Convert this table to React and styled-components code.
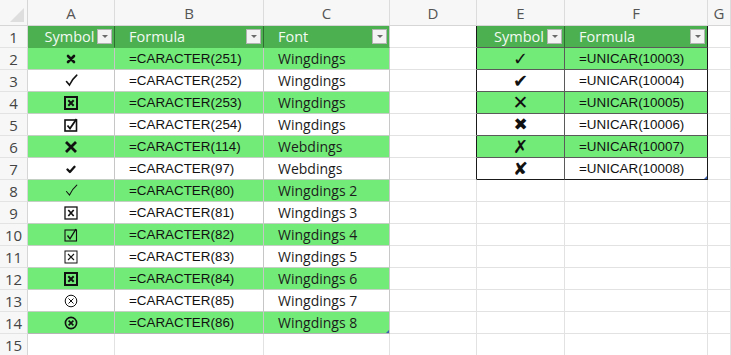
import React from 'react';
import styled, { createGlobalStyle, css } from 'styled-components';

const GlobalStyle = createGlobalStyle`
  html, body {
    margin: 0;
    padding: 0;
    background: #ffffff;
    overflow: hidden;
  }
`;

const COLS = ['A', 'B', 'C', 'D', 'E', 'F', 'G'];
const GREEN = '#4caf50';
const BAND = '#72eb78';
const GRID = '#e2e2e2';

const leftRows = [
  { sym: 'xSmall', formula: '=CARACTER(251)', font: 'Wingdings' },
  { sym: 'check', formula: '=CARACTER(252)', font: 'Wingdings' },
  { sym: 'boxXBold', formula: '=CARACTER(253)', font: 'Wingdings' },
  { sym: 'boxCheckBold', formula: '=CARACTER(254)', font: 'Wingdings' },
  { sym: 'xBig', formula: '=CARACTER(114)', font: 'Webdings' },
  { sym: 'checkSmall', formula: '=CARACTER(97)', font: 'Webdings' },
  { sym: 'checkThin', formula: '=CARACTER(80)', font: 'Wingdings 2' },
  { sym: 'boxX', formula: '=CARACTER(81)', font: 'Wingdings 3' },
  { sym: 'boxCheck', formula: '=CARACTER(82)', font: 'Wingdings 4' },
  { sym: 'boxXThin', formula: '=CARACTER(83)', font: 'Wingdings 5' },
  { sym: 'boxXBold', formula: '=CARACTER(84)', font: 'Wingdings 6' },
  { sym: 'circleX', formula: '=CARACTER(85)', font: 'Wingdings 7' },
  { sym: 'circleXBold', formula: '=CARACTER(86)', font: 'Wingdings 8' },
];

const rightRows = [
  { glyph: '\u2713', size: 18, formula: '=UNICAR(10003)' },
  { glyph: '\u2714', size: 18, formula: '=UNICAR(10004)' },
  { glyph: '\u2715', size: 19, formula: '=UNICAR(10005)' },
  { glyph: '\u2716', size: 17, formula: '=UNICAR(10006)' },
  { glyph: '\u2717', size: 18, formula: '=UNICAR(10007)' },
  { glyph: '\u2718', size: 18, formula: '=UNICAR(10008)' },
];

const Sheet = styled.div`
  display: grid;
  grid-template-columns: 28px 87px 149px 126px 87px 88px 143px 1fr;
  grid-template-rows: 26px repeat(15, 22px);
  width: 731px;
  height: 355px;
  overflow: hidden;
  font-family: 'Liberation Sans', Arial, sans-serif;
  color: #1a1a1a;
`;

const Corner = styled.div`
  position: relative;
  background: #f7f7f7;
  border-right: 1px solid #d6d6d6;
  border-bottom: 1px solid #d6d6d6;

  &::after {
    content: '';
    position: absolute;
    right: 3px;
    bottom: 3px;
    border-left: 14px solid transparent;
    border-bottom: 14px solid #dedede;
  }
`;

const ColHead = styled.div`
  display: flex;
  align-items: center;
  justify-content: center;
  background: #f7f7f7;
  border-right: 1px solid #dcdcdc;
  border-bottom: 1px solid #d6d6d6;
  font-family: 'Open Sans', sans-serif;
  font-size: 15px;
  color: #555;
`;

const RowHead = styled.div`
  display: flex;
  align-items: center;
  justify-content: center;
  background: #f7f7f7;
  border-right: 1px solid #d6d6d6;
  border-bottom: 1px solid #e3e3e3;
  font-family: 'Open Sans', sans-serif;
  font-size: 15px;
  color: #444;
`;

const Cell = styled.div`
  position: relative;
  display: flex;
  align-items: center;
  justify-content: ${(p) => (p.$center ? 'center' : 'flex-start')};
  padding-left: ${(p) => (p.$center ? '0' : '14px')};
  background: ${(p) => p.$bg || '#ffffff'};
  border-right: 1px solid ${(p) => p.$right || GRID};
  border-bottom: 1px solid ${(p) => p.$bottom || GRID};
  font-size: 13.4px;
  color: #111;
  white-space: nowrap;
  overflow: hidden;
  ${(p) =>
    p.$header &&
    css`
      font-family: 'Open Sans', sans-serif;
      font-size: 14.5px;
      color: #f2faf2;
      justify-content: space-between;
      padding-left: 14px;
      padding-right: 2px;
    `}
  ${(p) =>
    p.$aptos &&
    css`
      font-family: 'Open Sans', sans-serif;
      font-size: 14px;
      color: #1c1c1c;
    `}
`;

const HeadLabel = styled.span`
  flex: 1;
  text-align: ${(p) => (p.$center ? 'center' : 'left')};
`;

const Dropdown = styled.span`
  flex: none;
  width: 15px;
  height: 15px;
  box-sizing: border-box;
  background: #f3f3f3;
  border: 1px solid #b3b3b3;
  display: flex;
  align-items: center;
  justify-content: center;

  &::before {
    content: '';
    border-left: 3px solid transparent;
    border-right: 3px solid transparent;
    border-top: 3px solid #6a6a6a;
  }
`;

const FillHandle = styled.span`
  position: absolute;
  right: -1px;
  bottom: -1px;
  width: 0;
  height: 0;
  border-left: 5px solid transparent;
  border-bottom: 5px solid #3b5fb0;
`;

const Glyph = styled.span`
  font-family: 'DejaVu Sans', sans-serif;
  font-size: ${(p) => p.$size}px;
  line-height: 1;
  color: #111;
`;

const Icon = styled.svg`
  display: block;
  color: #111;
`;

function Symbol({ kind }) {
  switch (kind) {
    case 'xSmall':
      return (
        <Icon width="10" height="10" viewBox="0 0 10 10">
          <path d="M2 2 L8 8 M8 2 L2 8" stroke="currentColor" strokeWidth="2.6" strokeLinecap="round" />
        </Icon>
      );
    case 'check':
      return (
        <Icon width="13" height="13" viewBox="0 0 13 13">
          <path d="M1.5 7.5 L4.5 11 C6.5 7 8.5 4 11.8 1.2" stroke="currentColor" strokeWidth="1.6" fill="none" strokeLinecap="round" />
        </Icon>
      );
    case 'checkThin':
      return (
        <Icon width="13" height="13" viewBox="0 0 13 13">
          <path d="M1.5 7.5 L4.5 11 C6.5 7 8.5 4 11.8 1.2" stroke="currentColor" strokeWidth="1.1" fill="none" strokeLinecap="round" />
        </Icon>
      );
    case 'checkSmall':
      return (
        <Icon width="10" height="10" viewBox="0 0 10 10">
          <path d="M1.5 5.5 L3.9 8 L8.5 2.8" stroke="currentColor" strokeWidth="2.3" fill="none" strokeLinecap="round" strokeLinejoin="round" />
        </Icon>
      );
    case 'xBig':
      return (
        <Icon width="14" height="14" viewBox="0 0 14 14">
          <path d="M2 2 L12 12 M12 2 L2 12" stroke="currentColor" strokeWidth="2.8" />
        </Icon>
      );
    case 'boxXBold':
      return (
        <Icon width="14" height="14" viewBox="0 0 14 14">
          <rect x="1" y="1" width="12" height="12" fill="none" stroke="currentColor" strokeWidth="2" />
          <path d="M4.3 4.3 L9.7 9.7 M9.7 4.3 L4.3 9.7" stroke="currentColor" strokeWidth="2" />
        </Icon>
      );
    case 'boxX':
      return (
        <Icon width="14" height="14" viewBox="0 0 14 14">
          <rect x="1" y="1" width="12" height="12" fill="none" stroke="currentColor" strokeWidth="1.3" />
          <path d="M4.3 4 L9.7 10 M9.7 4 L4.3 10" stroke="currentColor" strokeWidth="1.7" />
        </Icon>
      );
    case 'boxXThin':
      return (
        <Icon width="14" height="14" viewBox="0 0 14 14">
          <rect x="1" y="1" width="12" height="12" fill="none" stroke="currentColor" strokeWidth="1" />
          <path d="M4 4 L10 10 M10 4 L4 10" stroke="currentColor" strokeWidth="1.1" />
        </Icon>
      );
    case 'boxCheckBold':
      return (
        <Icon width="14" height="14" viewBox="0 0 14 14">
          <rect x="1" y="2" width="11.5" height="11" fill="none" stroke="currentColor" strokeWidth="1.6" />
          <path d="M3.5 7.5 L6 10.5 L12.5 1" stroke="currentColor" strokeWidth="1.8" fill="none" />
        </Icon>
      );
    case 'boxCheck':
      return (
        <Icon width="14" height="14" viewBox="0 0 14 14">
          <rect x="1" y="2" width="11.5" height="11" fill="none" stroke="currentColor" strokeWidth="1.1" />
          <path d="M3.5 7.5 L6 10.8 L12 1" stroke="currentColor" strokeWidth="1.4" fill="none" />
        </Icon>
      );
    case 'circleX':
      return (
        <Icon width="14" height="14" viewBox="0 0 14 14">
          <circle cx="7" cy="7" r="5.8" fill="none" stroke="currentColor" strokeWidth="1" />
          <path d="M4.5 4.5 L9.5 9.5 M9.5 4.5 L4.5 9.5" stroke="currentColor" strokeWidth="1" />
        </Icon>
      );
    case 'circleXBold':
      return (
        <Icon width="14" height="14" viewBox="0 0 14 14">
          <circle cx="7" cy="7" r="5.6" fill="none" stroke="currentColor" strokeWidth="1.6" />
          <path d="M4.6 4.6 L9.4 9.4 M9.4 4.6 L4.6 9.4" stroke="currentColor" strokeWidth="1.6" />
        </Icon>
      );
    default:
      return null;
  }
}

export default function App() {
  const cells = [];

  cells.push(<Corner key="corner" />);
  COLS.forEach((c) => cells.push(<ColHead key={`h${c}`}>{c}</ColHead>));

  for (let r = 1; r <= 15; r++) {
    cells.push(<RowHead key={`r${r}`}>{r}</RowHead>);
    const inLeft = r <= 14;
    const inRight = r <= 7;
    const band = r % 2 === 0 ? BAND : '#ffffff';
    const leftBottom = r === 14 ? '#b5b5b5' : '#c3cfc3';

    // left table: A, B, C
    if (r === 1) {
      cells.push(
        <Cell key="A1" $header $bg={GREEN} $right="#2f6d31" $bottom={GREEN}>
          <HeadLabel $center>Symbol</HeadLabel>
          <Dropdown />
        </Cell>
      );
      cells.push(
        <Cell key="B1" $header $bg={GREEN} $right="#2f6d31" $bottom={GREEN}>
          <HeadLabel>Formula</HeadLabel>
          <Dropdown />
        </Cell>
      );
      cells.push(
        <Cell key="C1" $header $bg={GREEN} $right="#c8c8c8" $bottom={GREEN}>
          <HeadLabel>Font</HeadLabel>
          <Dropdown />
        </Cell>
      );
    } else if (inLeft) {
      const row = leftRows[r - 2];
      cells.push(
        <Cell key={`A${r}`} $center $bg={band} $right="#c6c6c6" $bottom={leftBottom}>
          <Symbol kind={row.sym} />
        </Cell>
      );
      cells.push(
        <Cell key={`B${r}`} $bg={band} $right="#c6c6c6" $bottom={leftBottom}>
          {row.formula}
        </Cell>
      );
      cells.push(
        <Cell key={`C${r}`} $aptos $bg={band} $right="#c8c8c8" $bottom={leftBottom}>
          {row.font}
          {r === 14 && <FillHandle />}
        </Cell>
      );
    } else {
      ['A', 'B', 'C'].forEach((c) => cells.push(<Cell key={`${c}${r}`} />));
    }

    cells.push(<Cell key={`D${r}`} $right={inRight ? '#1a1a1a' : GRID} />);

    // right table: E, F
    if (r === 1) {
      cells.push(
        <Cell key="E1" $header $bg={GREEN} $right="#2f6d31" $bottom="#5a5a5a">
          <HeadLabel $center>Symbol</HeadLabel>
          <Dropdown />
        </Cell>
      );
      cells.push(
        <Cell key="F1" $header $bg={GREEN} $right="#1a1a1a" $bottom="#5a5a5a">
          <HeadLabel>Formula</HeadLabel>
          <Dropdown />
        </Cell>
      );
    } else if (inRight) {
      const row = rightRows[r - 2];
      const bottom = r === 7 ? '#1a1a1a' : '#5a5a5a';
      cells.push(
        <Cell key={`E${r}`} $center $bg={band} $right="#5a5a5a" $bottom={bottom}>
          <Glyph $size={row.size}>{row.glyph}</Glyph>
        </Cell>
      );
      cells.push(
        <Cell key={`F${r}`} $bg={band} $right="#1a1a1a" $bottom={bottom}>
          {row.formula}
          {r === 7 && <FillHandle />}
        </Cell>
      );
    } else {
      cells.push(<Cell key={`E${r}`} />);
      cells.push(<Cell key={`F${r}`} />);
    }

    cells.push(<Cell key={`G${r}`} />);
  }

  return (
    <>
      <GlobalStyle />
      <Sheet>{cells}</Sheet>
    </>
  );
}
